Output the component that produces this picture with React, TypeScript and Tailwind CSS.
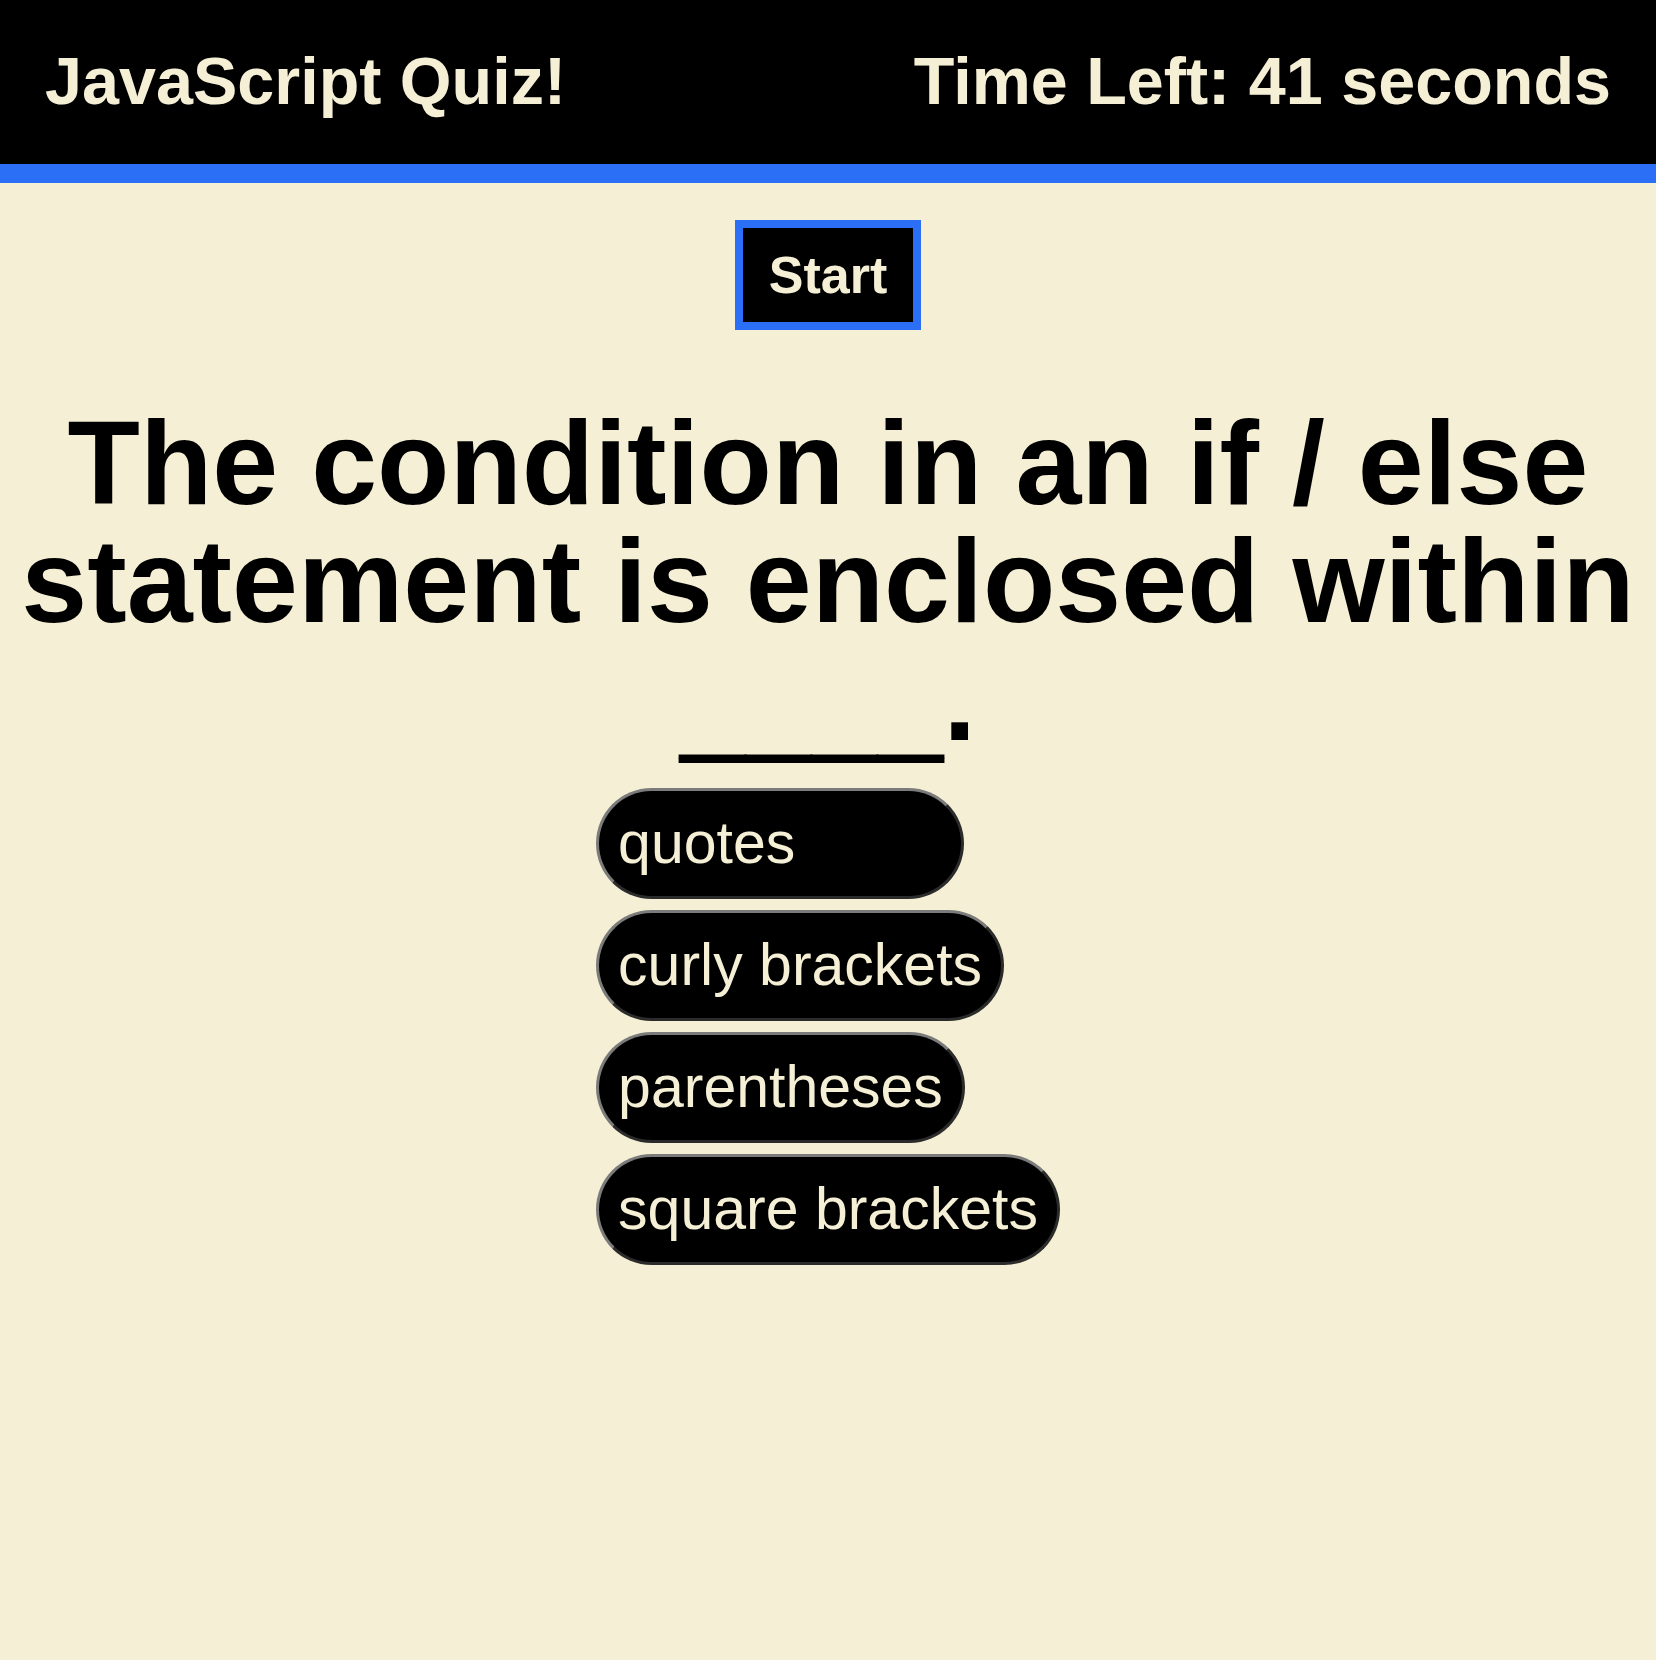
import React from 'react';

const answers = ['quotes', 'curly brackets', 'parentheses', 'square brackets'];

function Header({ secondsLeft }: { secondsLeft: number }) {
  return (
    <header className="flex h-[183px] items-center justify-between border-b-[19px] border-[#2a6ff6] bg-black px-[45px] pb-[1px] text-[66.5px] font-bold leading-none text-[#f5f0d5]">
      <h1>JavaScript Quiz!</h1>
      <p>Time Left: {secondsLeft} seconds</p>
    </header>
  );
}

export default function App() {
  return (
    <div className="min-h-[1660px] bg-[#f5f0d5] font-['Liberation_Sans',Arial,sans-serif]">
      <Header secondsLeft={41} />

      <main className="flex flex-col items-center">
        <button className="mt-[37px] border-[8px] border-[#2a6ff6] bg-black px-[26px] py-[17px] text-[52px] font-bold leading-[60px] text-[#f5f0d5]">
          Start
        </button>

        <h2 className="mt-[74px] w-full text-center text-[118.5px] font-bold leading-[118px] text-black">
          The condition in an if / else statement is enclosed within{' '}
          {/* arial's underscore sits lower and heavier than liberation's */}
          <span className="relative top-[4px] [text-shadow:0_4px_0_#000]">____</span>.
        </h2>

        <div className="mt-[30px] flex flex-col items-start gap-[11px]">
          {answers.map((answer) => (
            <button
              key={answer}
              className="min-w-[368px] rounded-full border-[3px] border-t-[#7b7b7b] border-l-[#7b7b7b] border-r-[#2b2b2b] border-b-[#2b2b2b] bg-black px-[19px] py-[18px] text-left text-[59px] leading-[69px] text-[#f5f0d5]"
            >
              {answer}
            </button>
          ))}
        </div>
      </main>
    </div>
  );
}
